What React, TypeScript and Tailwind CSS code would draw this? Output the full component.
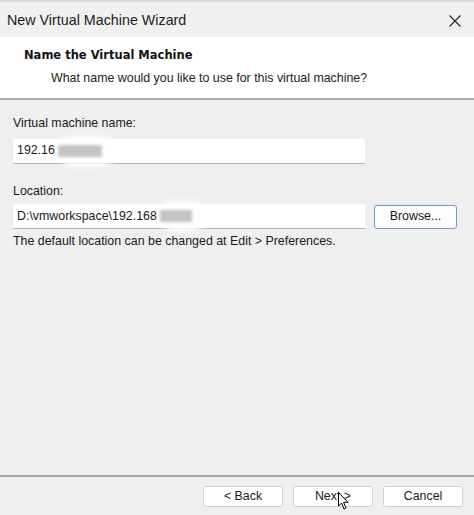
import React from "react";

const font = { fontFamily: "'Liberation Sans', Arial, sans-serif" };

// soft grey patch with a white glow, used to hide part of a field value
const Smudge = ({ w }: { w: string }) => (
  <span className={`relative ml-[1px] inline-block h-[14px] ${w} align-middle`}>
    <span className="absolute -inset-y-2 left-[2px] -right-3 rounded-full bg-white blur-[3px]" />
    <span className="absolute inset-x-[2px] inset-y-[1px] bg-[#c4c4c4] blur-[1.5px]" />
  </span>
);

const WizardButton = ({ label, children }: { label: string; children?: React.ReactNode }) => (
  <button className="relative h-[21px] w-[80px] rounded-[3px] border border-[#d0d0d0] bg-white text-[12.4px] text-[#1a1a1a]">
    {label}
    {children}
  </button>
);

export default function App() {
  return (
    <div className="flex h-[515px] w-[474px] flex-col bg-[#efefef] text-[12.4px] text-[#1a1a1a]" style={font}>
      <div className="h-[2px] bg-[#d9d9d9]" />
      {/* title bar */}
      <div className="flex h-[35px] items-center justify-between bg-[#f0f0f0] pl-[7px] pr-[13px]">
        <span className="mt-[3px] text-[14.3px] text-[#1c1c1c]">New Virtual Machine Wizard</span>
        <svg width="12" height="12" viewBox="0 0 12 12" className="mt-[3px]">
          <path d="M0.5 0.5 L11.5 11.5 M11.5 0.5 L0.5 11.5" stroke="#222" strokeWidth="1.1" />
        </svg>
      </div>
      {/* page header */}
      <div className="flex h-[61px] flex-col bg-white pl-[24px] pt-[10px]">
        <span className="font-bold text-[#111]" style={{ fontFamily: "Tahoma, 'DejaVu Sans', sans-serif", fontSize: "11.5px" }}>
          Name the Virtual Machine
        </span>
        <span className="mt-[5px] pl-[27px] text-[#222]">
          What name would you like to use for this virtual machine?
        </span>
      </div>
      <div className="h-[2px] bg-[#a9a9a9]" />
      {/* form */}
      <div className="flex flex-1 flex-col px-[13px] pt-[14px]">
        <span>Virtual machine name:</span>
        <div className="mt-[6px] flex h-[25px] w-[352px] items-center border-b border-[#b5b5b5] bg-white pl-[4px]">
          192.16
          <Smudge w="w-[48px]" />
        </div>
        <span className="mt-[18px]">Location:</span>
        <div className="mt-[4px] flex items-center gap-[9px]">
          <div className="flex h-[25px] w-[352px] items-center border-b border-[#b5b5b5] bg-white pl-[4px]">
            D:\vmworkspace\192.168
            <Smudge w="w-[36px]" />
          </div>
          <button className="h-[24px] w-[83px] rounded-[3px] border border-[#6e9bc9] bg-[#fdfdfd]">
            Browse...
          </button>
        </div>
        <span className="mt-[3px]">The default location can be changed at Edit &gt; Preferences.</span>
      </div>
      <div className="h-[2px] bg-[#a3a3a3]" />
      {/* footer buttons */}
      <div className="flex h-[38px] items-start justify-end gap-[10px] pr-[11px] pt-[9px]">
        <WizardButton label="< Back" />
        <WizardButton label="Next >">
          <svg width="12" height="19" viewBox="0 0 12 19" className="absolute left-[44px] top-[5px]">
            <path
              d="M0.5 0.5 L0.5 14 L3.6 11 L6 17 L8 16 L5.6 10.3 L10 10.3 Z"
              fill="#fff"
              stroke="#000"
              strokeWidth="1"
              strokeLinejoin="round"
            />
          </svg>
        </WizardButton>
        <WizardButton label="Cancel" />
      </div>
    </div>
  );
}
